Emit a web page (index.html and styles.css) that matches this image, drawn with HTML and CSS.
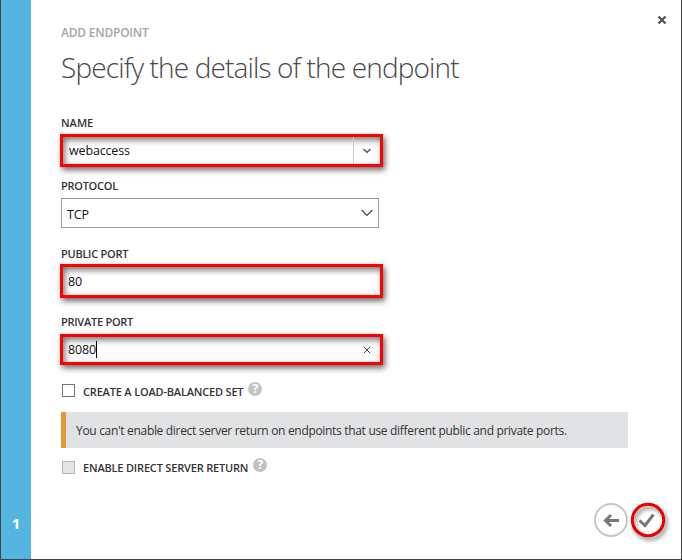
FILE: index.html
```
<!DOCTYPE html>
<html lang="en">
<head>
<meta charset="utf-8">
<title>Add Endpoint</title>
<link rel="stylesheet" href="styles.css">
</head>
<body>
<div class="dialog">
  <aside class="steps"><span>1</span></aside>
  <main class="content">
    <svg class="close" viewBox="0 0 10 10"><path d="M1.5 1.5 8.5 8.5M8.5 1.5 1.5 8.5"/></svg>
    <p class="eyebrow">ADD ENDPOINT</p>
    <h1>Specify the details of the endpoint</h1>

    <label class="lbl name-lbl">NAME</label>
    <div class="field marked name"><span class="value">webaccess</span><span class="drop"><svg viewBox="0 0 10 8"><path d="M1.5 2 5 5.3 8.5 2"/></svg></span></div>

    <label class="lbl protocol-lbl">PROTOCOL</label>
    <div class="field select"><span class="value">TCP</span><svg viewBox="0 0 12 8"><path d="M.7 1 6 6.3 11.3 1"/></svg></div>

    <label class="lbl public-lbl">PUBLIC PORT</label>
    <div class="field marked public"><span class="value">80</span></div>

    <label class="lbl private-lbl">PRIVATE PORT</label>
    <div class="field marked private"><span class="value">8080</span><i class="caret"></i><svg class="clear" viewBox="0 0 8 8"><path d="M.6.6 7.4 7.4M7.4.6.6 7.4"/></svg></div>

    <div class="check balanced"><i class="box"></i><span class="check-text">CREATE A LOAD-BALANCED SET</span><i class="help">?</i></div>
    <div class="notice">You can't enable direct server return on endpoints that use different public and private ports.</div>
    <div class="check direct"><i class="box disabled"></i><span class="check-text">ENABLE DIRECT SERVER RETURN</span><i class="help">?</i></div>

    <div class="actions">
      <svg class="back" viewBox="0 0 34 34"><circle cx="17" cy="17" r="16"/><path d="M25 17.500H12M17 12l-5.500 5.500 5.500 5.500"/></svg>
      <svg class="ok" viewBox="0 0 36 36"><circle cx="18" cy="18" r="15.700"/><path d="M9.500 18.500l5.500 5 8.500-11"/></svg>
    </div>
  </main>
</div>
</body>
</html>
```
FILE: styles.css
```
* { box-sizing: border-box; }
body {
  margin: 0;
  font-family: "Open Sans", "Noto Sans", sans-serif;
  color: #333;
  background: #fff;
}
.dialog {
  display: flex;
  width: 682px;
  height: 560px;
  border: solid #444;
  border-width: 0 1px 1px;
  overflow: hidden;
}
.steps {
  display: flex;
  align-items: flex-end;
  justify-content: center;
  width: 30px;
  padding-bottom: 26px;
  background: #54b6e0;
  color: #fff;
  font-size: 15px;
  font-weight: 700;
  line-height: 20px;
}
.content {
  position: relative;
  flex: 1;
  padding: 23px 0 0 30px;
}
svg { display: block; fill: none; }
.close {
  position: absolute;
  top: 15px;
  right: 14px;
  width: 10px;
  height: 10px;
  stroke: #555;
  stroke-width: 2.4;
}
.eyebrow {
  margin: 0;
  font-size: 12px;
  font-weight: 600;
  line-height: 20px;
  letter-spacing: -.22px;
  color: #a6a6a6;
}
h1 {
  margin: 4px 0 0;
  font-size: 28px;
  font-weight: 300;
  line-height: 40px;
  letter-spacing: -.86px;
  white-space: nowrap;
  color: #484848;
}
.lbl {
  display: block;
  height: 16px;
  font-size: 11px;
  font-weight: 600;
  line-height: 16px;
  letter-spacing: -.26px;
}
.name-lbl { margin-top: 28px; letter-spacing: 0; }
.protocol-lbl { margin-top: 11px; }
.public-lbl { margin-top: 18px; }
.private-lbl { margin-top: 16px; }
.field {
  display: flex;
  align-items: center;
  font-size: 12.5px;
  letter-spacing: -.15px;
  color: #111;
}
.marked {
  width: 323px;
  margin-left: -1px;
  padding-left: 5px;
  border: 3px solid #f00;
  box-shadow: 2px 3px 6px rgba(0,0,0,.6), inset 2px 3px 6px rgba(0,0,0,.55);
}
.name { height: 33px; margin-top: 3px; padding-left: 6px; }
.name .drop {
  display: flex;
  align-items: center;
  justify-content: center;
  width: 27px;
  height: 27px;
  margin-left: auto;
  border-left: 1px solid #ccc;
}
.drop svg { width: 10px; height: 8px; stroke: #666; stroke-width: 1.7; }
.select {
  width: 318px;
  height: 30px;
  margin-top: 4px;
  padding: 2px 5px 0;
  border: 1px solid #999;
}
.select svg { width: 12px; height: 8px; margin: -2px 0 0 auto; stroke: #444; stroke-width: 1.2; }
.public { height: 34px; margin-top: 2px; }
.private { height: 31px; margin-top: 4px; }
.caret { width: 1px; height: 17px; background: #000; }
.clear { width: 8px; height: 8px; margin: 0 9px 0 auto; stroke: #444; }
.check { display: flex; height: 18px; font-size: 11px; font-weight: 600; line-height: 18px; letter-spacing: -.18px; }
.balanced { margin-top: 17px; }
.balanced .check-text { line-height: 20px; }
.direct { margin-top: 11px; }
.box { width: 13px; height: 13px; margin: 2px 8px 0 1px; border: 1px solid #777; }
.disabled { border-color: #b5b5b5; background: #e5e5e5; }
.help {
  width: 14px;
  height: 14px;
  margin-left: 5px;
  border-radius: 50%;
  background: #c3c3c3;
  color: #fff;
  font: 700 12px/14px "Open Sans", sans-serif;
  letter-spacing: 0;
  text-align: center;
}
.direct .help { margin-top: -1px; }
.notice {
  width: 567px;
  height: 36px;
  margin-top: 12px;
  padding-left: 10px;
  border-left: 5px solid #e39a33;
  background: #e1e2e4;
  font-size: 12px;
  line-height: 37px;
  letter-spacing: -.315px;
  white-space: nowrap;
}
.actions { position: absolute; right: 15px; bottom: 21px; display: flex; align-items: center; gap: 2px; }
.back { width: 34px; height: 34px; stroke: #777; stroke-width: 3; }
.back circle { stroke: #c8c8c8; stroke-width: 2; }
.ok { width: 36px; height: 36px; stroke: #777; stroke-width: 3; overflow: visible; }
.ok circle { stroke: #e80000; stroke-width: 3; filter: drop-shadow(2px 3px 2px rgba(0,0,0,.5)); }
```
